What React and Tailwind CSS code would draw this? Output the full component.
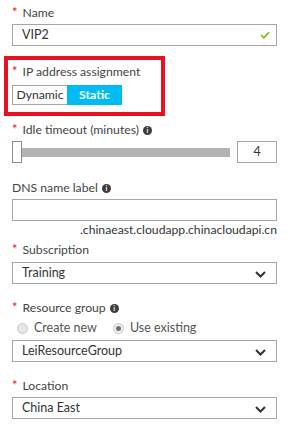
import React from 'react';

const font = { fontFamily: '"Segoe UI", Lato, "Open Sans", sans-serif' };

const Star = () => <span className="text-[#e81123] mr-[5px] text-[13px]">*</span>;

const Info = () => (
  <span className="inline-flex items-center justify-center w-[9px] h-[9px] rounded-full bg-[#3c3c3c] text-white text-[7px] font-bold leading-none ml-[4px] align-middle">
    i
  </span>
);

const Label = ({ children, required, info }) => (
  <div className="h-[16px] flex items-center text-[12.2px] text-[#444]">
    {required && <Star />}
    <span>{children}</span>
    {info && <Info />}
  </div>
);

const Chevron = () => (
  <svg width="11" height="7" viewBox="0 0 11 7" className="absolute right-[10px] top-[8px]">
    <path d="M1 1 L5.5 5.5 L10 1" fill="none" stroke="#333" strokeWidth="2" />
  </svg>
);

const Select = ({ value }) => (
  <div className="relative w-[265px] h-[22px] border border-[#a6a6a6] flex items-center pl-[9px] text-[12.5px] text-[#333]">
    {value}
    <Chevron />
  </div>
);

export default function App() {
  return (
    <div className="w-[290px] h-[431px] bg-white pl-[12px] pt-[5px]" style={font}>
      <Label required>Name</Label>
      <div className="relative mt-[3px] w-[265px] h-[22px] border border-[#a6a6a6] flex items-center pl-[9px] text-[12.5px] text-[#333]">
        VIP2
        <svg width="10" height="8" viewBox="0 0 10 8" className="absolute right-[6px] top-[6px]">
          <path d="M1 4 L3.8 6.8 L9 1.2" fill="none" stroke="#7fba00" strokeWidth="1.6" />
        </svg>
      </div>

      <div className="-ml-[8px] mt-[10px] w-[161px] h-[60px] border-4 border-[#e81123] pl-[4px] pt-[4px]">
        <Label required>IP address assignment</Label>
        <div className="mt-[5px] flex h-[20px] text-[12.2px]">
          <div className="w-[55px] border border-[#a6a6a6] border-r-0 flex items-center justify-center text-[#333]">
            Dynamic
          </div>
          <div className="w-[55px] bg-[#00bcf2] flex items-center justify-center text-white font-bold">
            Static
          </div>
        </div>
      </div>

      <div className="mt-[6px]">
        <Label required info>Idle timeout (minutes)</Label>
      </div>
      <div className="mt-[3px] flex items-center h-[22px]">
        <div className="w-[10px] h-[22px] border border-[#8a8a8a] bg-white" />
        <div className="w-[208px] h-[9px] bg-[#b3b3b3]" />
        <div className="ml-[7px] w-[40px] h-[22px] border border-[#a6a6a6] flex items-center justify-center text-[12.5px] text-[#333]">
          4
        </div>
      </div>

      <div className="mt-[17px]">
        <Label info>DNS name label</Label>
      </div>
      <div className="mt-[3px] w-[265px] h-[22px] border border-[#a6a6a6]" />
      <div className="mt-[2px] w-[265px] text-right text-[12.2px] leading-[14px] text-[#333]">
        .chinaeast.cloudapp.chinacloudapi.cn
      </div>

      <div className="mt-[5px]">
        <Label required>Subscription</Label>
      </div>
      <div className="mt-[4px]">
        <Select value="Training" />
      </div>

      <div className="mt-[16px]">
        <Label required info>Resource group</Label>
      </div>
      <div className="mt-[4px] h-[16px] flex items-center text-[12.5px] text-[#555]">
        <span className="ml-[5px] w-[11px] h-[11px] rounded-full border border-[#c8c8c8] bg-[#e6e6e6]" />
        <span className="ml-[6px]">Create new</span>
        <span className="ml-[16px] w-[11px] h-[11px] rounded-full border border-[#c8c8c8] bg-[#f0f0f0] flex items-center justify-center">
          <span className="w-[5px] h-[5px] rounded-full bg-[#707070]" />
        </span>
        <span className="ml-[6px]">Use existing</span>
      </div>
      <div className="mt-[4px]">
        <Select value="LeiResourceGroup" />
      </div>

      <div className="mt-[16px]">
        <Label required>Location</Label>
      </div>
      <div className="mt-[3px]">
        <Select value="China East" />
      </div>
    </div>
  );
}
